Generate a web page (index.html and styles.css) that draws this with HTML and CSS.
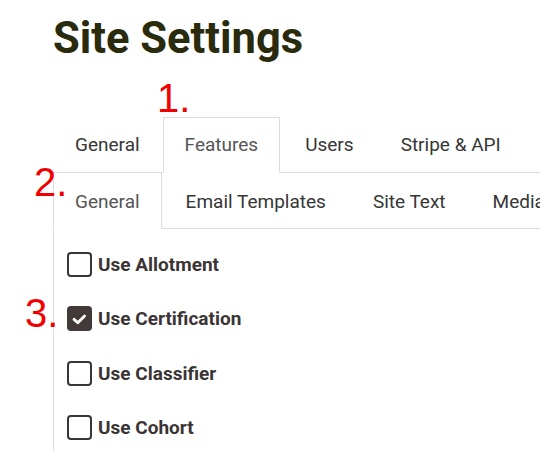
FILE: index.html
```html
<!DOCTYPE html>
<html lang="en">
<head>
<meta charset="utf-8">
<title>Site Settings</title>
<link rel="stylesheet" href="styles.css">
</head>
<body>
<div class="page">
  <h1 class="title">Site Settings</h1>
  <ul class="tabs">
    <li class="tab">General</li>
    <li class="tab active">Features</li>
    <li class="tab">Users</li>
    <li class="tab">Stripe &amp; API</li>
  </ul>
  <div class="pane">
    <ul class="tabs subtabs">
      <li class="tab active">General</li>
      <li class="tab">Email Templates</li>
      <li class="tab">Site Text</li>
      <li class="tab">Media</li>
    </ul>
    <div class="options">
      <label class="option"><span class="box"></span><span class="label">Use Allotment</span></label>
      <label class="option"><span class="box checked"><svg viewBox="0 0 25 25" width="21" height="21"><polyline points="6,13.5 10.5,17.5 18.5,9.5" fill="none" stroke="#fff" stroke-width="3.4" stroke-linecap="round" stroke-linejoin="round"/></svg></span><span class="label">Use Certification</span></label>
      <label class="option"><span class="box"></span><span class="label">Use Classifier</span></label>
      <label class="option"><span class="box"></span><span class="label">Use Cohort</span></label>
    </div>
  </div>
</div>
<span class="note note-1">1.</span>
<span class="note note-2">2.</span>
<span class="note note-3">3.</span>
</body>
</html>
```
FILE: styles.css
```css
html, body {
  margin: 0;
  padding: 0;
  background: #fff;
}
body {
  position: relative;
  overflow: hidden;
  width: 540px;
  height: 451px;
  font-family: Roboto, "Liberation Sans", sans-serif;
}
.page {
  width: 900px;
  padding-left: 53px;
}
.title {
  margin: 0;
  padding-top: 13px;
  font-size: 43.5px;
  line-height: 52px;
  font-weight: 700;
  color: #2a2a0c;
}
.tabs {
  display: flex;
  list-style: none;
  margin: 52px 0 0 0;
  padding: 0;
  border-bottom: 1px solid #dddddd;
  white-space: nowrap;
}
.tab {
  border: 1px solid transparent;
  margin-bottom: -1px;
  margin-right: 3px;
  padding: 13px 21px 14px;
  font-size: 19px;
  line-height: 27px;
  color: #363636;
  background: transparent;
}
.tab:first-child {
  margin-right: 1px;
}
.tab.active {
  border-color: #dddddd #dddddd transparent;
  background: #fff;
  color: #555555;
}
.pane {
  border-left: 1px solid #dddddd;
  height: 300px;
}
.subtabs {
  margin: -1px 0 0 -1px;
}
.subtabs .tab {
  padding: 15px 21px 13px;
}
.subtabs .tab:first-child {
  margin-right: 2px;
}
.options {
  display: flex;
  flex-direction: column;
  gap: 29.4px;
  padding: 23px 0 0 13px;
}
.option {
  display: flex;
  align-items: center;
  height: 25px;
}
.box {
  box-sizing: border-box;
  width: 25px;
  height: 25px;
  border: 2px solid #3b3434;
  border-radius: 4px;
  display: flex;
  align-items: center;
  justify-content: center;
}
.box.checked {
  background: #423a38;
  border-color: #423a38;
}
.label {
  margin-left: 6px;
  font-size: 19px;
  font-weight: 700;
  color: #3b3434;
}
.note {
  position: absolute;
  font-family: "Liberation Sans", Arial, sans-serif;
  font-size: 40px;
  line-height: 40px;
  color: #f00000;
}
.note-1 { left: 157px; top: 78px; }
.note-2 { left: 34px; top: 162px; }
.note-3 { left: 25px; top: 293px; }
```
